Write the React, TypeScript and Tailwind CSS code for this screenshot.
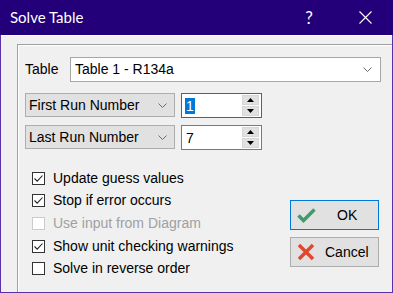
import React from 'react';

const font = { fontFamily: '"Liberation Sans", Arial, sans-serif' };

function Chevron({ className = '' }: { className?: string }) {
    return (
        <svg width="9" height="5" viewBox="0 0 9 5" className={className}>
            <path d="M0.5 0.5 L4.5 4.5 L8.5 0.5" fill="none" stroke="#6b6b6b" strokeWidth="1" />
        </svg>
    );
}

function SpinEdit({ value, focused }: { value: string; focused?: boolean }) {
    return (
        <div className={`w-[81px] h-[25px] bg-white border flex items-center pl-[3px] pr-[2px] ${focused ? 'border-[#0078d7]' : 'border-[#7a7a7a]'}`}>
            {focused ? (
                <span className="bg-[#0078d7] text-white leading-[16px] px-px">{value}</span>
            ) : (
                <span className="leading-[16px] px-px text-black">{value}</span>
            )}
            {/* spin buttons */}
            <div className="ml-auto flex flex-col gap-px">
                <div className="w-[17px] h-[10px] bg-[#e1e1e1] border border-[#d6d6d6] flex items-center justify-center">
                    <svg width="7" height="4" viewBox="0 0 7 4"><path d="M0 4 L3.5 0 L7 4 Z" fill="#000" /></svg>
                </div>
                <div className="w-[17px] h-[10px] bg-[#e1e1e1] border border-[#d6d6d6] flex items-center justify-center">
                    <svg width="7" height="4" viewBox="0 0 7 4"><path d="M0 0 L3.5 4 L7 0 Z" fill="#000" /></svg>
                </div>
            </div>
        </div>
    );
}

function RunSelect({ label }: { label: string }) {
    return (
        <div className="w-[150px] h-[24px] bg-[#e1e1e1] border border-[#adadad] flex items-center pl-[3px] pr-[7px]">
            <span>{label}</span>
            <Chevron className="ml-auto" />
        </div>
    );
}

function Check({ label, checked, disabled, h }: { label: string; checked?: boolean; disabled?: boolean; h: string }) {
    return (
        <div className={`flex items-center gap-[8px] ${h}`}>
            <div className={`w-[13px] h-[13px] border bg-white flex items-center justify-center ${disabled ? 'border-[#cccccc]' : 'border-[#333333]'}`}>
                {checked && (
                    <svg width="11" height="11" viewBox="0 0 11 11">
                        <path d="M1.5 5.5 L4.2 8.2 L9.5 2.5" fill="none" stroke="#222" strokeWidth="1.1" />
                    </svg>
                )}
            </div>
            <span className={disabled ? 'text-[#a0a0a0]' : 'text-black'}>{label}</span>
        </div>
    );
}

export default function App() {
    return (
        <div className="w-[393px] h-[293px] bg-[#5b31a9] flex flex-col text-[14px] text-black" style={font}>
            {/* Title bar */}
            <div className="h-[35px] bg-[#23007a] flex items-center text-white shrink-0">
                <span className="pl-[10px] text-[15px]" style={{ fontFamily: 'Lato, "Liberation Sans", sans-serif' }}>Solve Table</span>
                <div className="ml-auto w-[56px] flex justify-center text-[17px]" style={{ fontFamily: 'Lato, sans-serif' }}>?</div>
                <div className="w-[56px] flex justify-center">
                    <svg width="13" height="13" viewBox="0 0 13 13">
                        <path d="M0.5 0.5 L12.5 12.5 M12.5 0.5 L0.5 12.5" stroke="#fff" strokeWidth="1.1" />
                    </svg>
                </div>
            </div>

            {/* Body */}
            <div className="flex-1 mx-px mb-px bg-[#f0f0f0] border-t border-white flex pl-[16px] pt-[8px]">
                <div className="flex-1 flex border-t border-l border-[#a0a0a0]">
                    <div className="flex-1 flex flex-col border-t border-l border-white pl-[6px] pt-[11px]">
                        {/* Table row */}
                        <div className="flex items-center h-[25px]">
                            <span className="w-[45px]">Table</span>
                            <div className="w-[311px] h-[25px] bg-white border border-[#a6a6a6] flex items-center pl-[4px] pr-[8px]">
                                <span>Table 1 - R134a</span>
                                <Chevron className="ml-auto" />
                            </div>
                        </div>

                        <div className="flex items-start gap-[6px] mt-[11px]">
                            <RunSelect label="First Run Number" />
                            <SpinEdit value="1" focused />
                        </div>
                        <div className="flex items-start gap-[6px] mt-[7px]">
                            <RunSelect label="Last Run Number" />
                            <SpinEdit value="7" />
                        </div>

                        <div className="flex mt-[17px]">
                            <div className="w-[265px] flex flex-col pl-[7px]">
                                <Check label="Update guess values" checked h="h-[22px]" />
                                <Check label="Stop if error occurs" checked h="h-[23px]" />
                                <Check label="Use input from Diagram" disabled h="h-[23px]" />
                                <Check label="Show unit checking warnings" checked h="h-[22px]" />
                                <Check label="Solve in reverse order" h="h-[23px]" />
                            </div>
                            <div className="flex flex-col gap-[7px] pt-[33px]">
                                <button className="w-[89px] h-[30px] bg-[#e1e1e1] border border-[#0078d7] flex items-center pl-[6px]">
                                    <svg width="19" height="15" viewBox="0 0 19 15">
                                        <path d="M1.5 7.5 L6.5 12.5 L17.5 1.5" fill="none" stroke="#3d9b6d" strokeWidth="3.4" />
                                    </svg>
                                    <span className="ml-[21px]">OK</span>
                                </button>
                                <button className="w-[89px] h-[30px] bg-[#e1e1e1] border border-[#adadad] flex items-center pl-[6px]">
                                    <svg width="18" height="18" viewBox="0 0 18 18">
                                        <path d="M2 2 L16 16 M16 2 L2 16" fill="none" stroke="#e0472d" strokeWidth="3.4" />
                                    </svg>
                                    <span className="ml-[10px]">Cancel</span>
                                </button>
                            </div>
                        </div>
                    </div>
                </div>
            </div>
        </div>
    );
}
